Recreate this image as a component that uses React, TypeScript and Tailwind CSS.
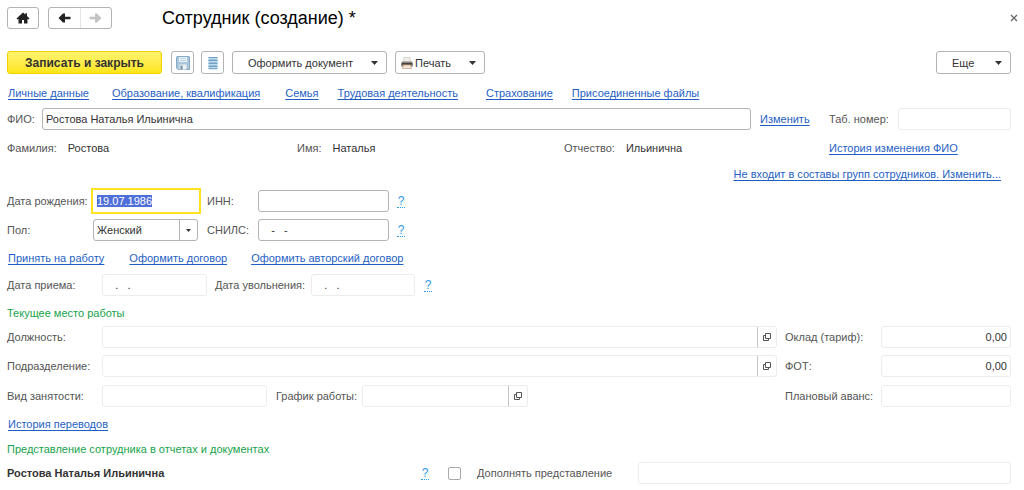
import type { ReactNode } from "react";
import { clsx } from "clsx";

type LinkProps = {
  children: ReactNode;
  className?: string;
};

const TextLink = ({ children, className }: LinkProps) => (
  <a href="#" className={clsx("whitespace-nowrap text-[#1f5fc4] underline underline-offset-2", className)}>
    {children}
  </a>
);

const Help = ({ className }: { className?: string }) => (
  <a
    href="#"
    aria-label="Справка"
    className={clsx("w-2 shrink-0 border-b border-dotted border-[#2f9be6] text-center text-[12px] leading-3 text-[#2f9be6]", className)}
  >
    ?
  </a>
);

type FieldProps = {
  id: string;
  label: string;
  labelClass?: string;
  className?: string;
  value?: string;
  muted?: boolean;
};

const Field = ({ id, label, labelClass, className, value = "", muted }: FieldProps) => (
  <>
    <label htmlFor={id} className={clsx("shrink-0 whitespace-nowrap", labelClass)}>
      {label}
    </label>
    <input
      id={id}
      type="text"
      defaultValue={value}
      readOnly={muted}
      className={clsx(
        "h-[22px] min-w-0 rounded-[3px] border bg-white px-[3px] whitespace-pre text-[#333] outline-none",
        muted ? "border-[#ececec]" : "border-[#b3b3b3]",
        className
      )}
    />
  </>
);

const OpenIcon = () => (
  <svg viewBox="0 0 10 10" className="size-[10px]" fill="none" stroke="#555" strokeWidth="1">
    <path d="M3.500 1.500h5v5h-5z" />
    <path d="M3.500 3.500h-2v5h5v-2" />
  </svg>
);

type PickerProps = {
  id: string;
  label: string;
  labelClass?: string;
  className?: string;
};

const Picker = ({ id, label, labelClass, className }: PickerProps) => (
  <>
    <label htmlFor={id} className={clsx("shrink-0 whitespace-nowrap", labelClass)}>
      {label}
    </label>
    <div className={clsx("flex h-[22px] min-w-0 rounded-[3px] border border-[#ececec] bg-white", className)}>
      <input id={id} type="text" readOnly className="min-w-0 flex-1 px-[3px] outline-none" />
      <button type="button" aria-label="Открыть" className="flex w-[19px] items-center justify-center border-l border-[#c4c4c4]">
        <OpenIcon />
      </button>
    </div>
  </>
);

const Caret = () => (
  <svg viewBox="0 0 7 4" className="h-1 w-[7px]" fill="#333">
    <path d="M0 0h7L3.500 4z" />
  </svg>
);

const buttonClass =
  "flex h-[23px] items-center rounded-[3px] border border-[#b3b3b3] bg-white text-[#333] whitespace-nowrap";

const HomeIcon = () => (
  <svg viewBox="0 0 14 12" className="h-3 w-[14px]" fill="#222">
    <path d="M7 0.500L0.500 6.500l1 1L2.500 6.700V11.500h3.500V8h2v3.500h3.500V6.700l1 .8 1-1L11 4V1.200H9.300v1.300z" />
  </svg>
);

const ArrowIcon = ({ forward }: { forward?: boolean }) => (
  <svg
    viewBox="0 0 13 10"
    className={clsx("h-[10px] w-[13px]", forward && "rotate-180")}
    fill={forward ? "#c4c4c4" : "#222"}
  >
    <path d="M0.500 5L5 0.500H7V3.800H12.500V6.200H7V9.500H5z" />
  </svg>
);

const SaveIcon = () => (
  <svg viewBox="0 0 14 14" className="size-[14px]">
    <path d="M1 0.500h12l.5.5v12.500H2L.5 12V1z" fill="#a9c6dc" stroke="#86a9c4" />
    <path d="M3 1h8v5H3z" fill="#eef6fb" />
    <path d="M4 2.500h6M4 4.500h6" stroke="#b4d3e8" />
    <path d="M3.500 8.500h7v5h-7z" fill="#edf2f5" />
    <path d="M4.500 9.500h2v4h-2z" fill="#6f8da3" />
  </svg>
);

const ListIcon = () => (
  <svg viewBox="0 0 10 14" className="h-[14px] w-[10px]">
    <path d="M.5 1h9v12h-9z" fill="#9cc3de" />
    <path d="M.5 1.500h9M.5 4.500h9M.5 7.500h9M.5 10.500h9M.5 12.800h9" stroke="#6796b6" strokeWidth=".8" />
    <path d="M1 2.500h8M1 5.500h8M1 8.500h8M1 11.500h8" stroke="#bcdcf0" />
  </svg>
);

const PrinterIcon = () => (
  <svg viewBox="0 0 12 12" className="size-3">
    <path d="M3 .5h6l.5 4.500h-7z" fill="#f0ede9" stroke="#c4bdb5" strokeWidth=".6" />
    <path d="M1 4.500h10l1 2v3H0v-3z" fill="#8f8782" />
    <path d="M1 6h10v1.500H1z" fill="#45403c" />
    <path d="M2.500 8h7l1 3.500h-9z" fill="#f5e6d8" stroke="#b98d6c" strokeWidth=".6" />
  </svg>
);

const Header = () => (
  <header className="flex h-[22px] items-center">
    <button type="button" aria-label="Главная" className="flex h-[22px] w-8 items-center justify-center rounded-[3px] border border-[#b3b3b3]">
      <HomeIcon />
    </button>
    <div className="ml-[9px] flex h-[22px] w-16 rounded-[3px] border border-[#b3b3b3]">
      <button type="button" aria-label="Назад" className="flex flex-1 items-center justify-center border-r border-[#e4e4e4]">
        <ArrowIcon />
      </button>
      <button type="button" aria-label="Вперед" className="flex flex-1 items-center justify-center">
        <ArrowIcon forward />
      </button>
    </div>
    <h1 className="ml-[50px] flex-1 text-[18px] leading-[22px] text-black">Сотрудник (создание) *</h1>
    <button type="button" aria-label="Закрыть" className="-mr-2 p-px">
      <svg viewBox="0 0 8 8" className="size-2" stroke="#666" strokeWidth="1.300">
        <path d="M1 1l6 6M7 1L1 7" />
      </svg>
    </button>
  </header>
);

const Toolbar = () => (
  <div className="mt-[22px] flex">
    <button
      type="button"
      className="h-[23px] w-[155px] rounded-[3px] border border-[#f0d000] bg-linear-to-b from-[#fff36b] to-[#ffe60f] text-[12px] font-bold text-[#333]"
    >
      Записать и закрыть
    </button>
    <button type="button" aria-label="Записать" className={clsx(buttonClass, "ml-[9px] w-[23px] justify-center")}>
      <SaveIcon />
    </button>
    <button type="button" aria-label="Список" className={clsx(buttonClass, "ml-[7px] w-[23px] justify-center")}>
      <ListIcon />
    </button>
    <button type="button" className={clsx(buttonClass, "ml-2 w-[155px] justify-between pr-2 pl-[15px]")}>
      Оформить документ
      <Caret />
    </button>
    <button type="button" className={clsx(buttonClass, "ml-2 w-[90px] pr-2 pl-[5px]")}>
      <PrinterIcon />
      <span className="ml-[2px] flex-1 text-left">Печать</span>
      <Caret />
    </button>
    <button type="button" className={clsx(buttonClass, "ml-auto w-[75px] justify-between pr-2 pl-[15px]")}>
      Еще
      <Caret />
    </button>
  </div>
);

const NameItem = ({ label, value }: { label: string; value: string }) => (
  <div className="flex gap-[11px]">
    <span>{label}</span>
    <span className="text-[#333]">{value}</span>
  </div>
);

const App = () => {
  return (
    <main className="min-h-screen bg-white pt-[7px] pr-[13px] pb-[6px] pl-[7px] font-['Liberation_Sans',Arial,sans-serif] text-[11px] leading-[22px] text-[#555]">
      <Header />
      <Toolbar />

      <nav className="mt-2 flex">
        <TextLink className="ml-px">Личные данные</TextLink>
        <TextLink className="ml-[23px]">Образование, квалификация</TextLink>
        <TextLink className="ml-[25px]">Семья</TextLink>
        <TextLink className="ml-[19px]">Трудовая деятельность</TextLink>
        <TextLink className="ml-7">Страхование</TextLink>
        <TextLink className="ml-[19px]">Присоединенные файлы</TextLink>
      </nav>

      <form>
        <div className="mt-1 flex items-center">
          <Field id="fio" label="ФИО:" labelClass="w-[35px]" className="flex-1" value="Ростова Наталья Ильинична" />
          <TextLink className="ml-[9px] w-[69px]">Изменить</TextLink>
          <Field id="number" label="Таб. номер:" labelClass="w-[69px]" className="w-[113px]" muted />
        </div>

        <div className="mt-[7px] grid grid-cols-[290fr_267fr_265fr_182px]">
          <NameItem label="Фамилия:" value="Ростова" />
          <NameItem label="Имя:" value="Наталья" />
          <NameItem label="Отчество:" value="Ильинична" />
          <TextLink>История изменения ФИО</TextLink>
        </div>

        <div className="mt-1 flex justify-end pr-[10px]">
          <TextLink>Не входит в составы групп сотрудников. Изменить...</TextLink>
        </div>

        <div className="mt-[3px] flex items-center">
          <label htmlFor="birth" className="w-[84px] whitespace-nowrap">
            Дата рождения:
          </label>
          <input
            id="birth"
            type="text"
            defaultValue="19.07.1986"
            autoFocus
            onFocus={(e) => e.target.select()}
            className="h-[26px] w-[110px] border-2 border-[#ffe11f] px-1 text-[#333] outline-none selection:bg-[#4f6fd9] selection:text-white"
          />
          <Field id="inn" label="ИНН:" labelClass="ml-[6px] w-[51px]" className="w-[131px]" />
          <Help className="ml-2" />
        </div>

        <div className="mt-[5px] flex items-center">
          <label htmlFor="sex" className="w-[86px]">
            Пол:
          </label>
          <div className="relative w-[105px]">
            <select
              id="sex"
              className="block h-[22px] w-full appearance-none rounded-[3px] border border-[#b3b3b3] bg-white px-[3px] leading-5 text-[#333] outline-none"
            >
              <option>Женский</option>
              <option>Мужской</option>
            </select>
            <span className="pointer-events-none absolute inset-y-px right-px flex w-[18px] items-center justify-center border-l border-[#b3b3b3]">
              <svg viewBox="0 0 5 3" className="h-[3px] w-[5px]" fill="#333">
                <path d="M0 0h5L2.500 3z" />
              </svg>
            </span>
          </div>
          <Field id="snils" label="СНИЛС:" labelClass="ml-[9px] w-[51px]" className="w-[131px]" value="   -   -" />
          <Help className="ml-2" />
        </div>

        <div className="mt-[6px] flex">
          <TextLink className="ml-px">Принять на работу</TextLink>
          <TextLink className="ml-[25px]">Оформить договор</TextLink>
          <TextLink className="ml-6">Оформить авторский договор</TextLink>
        </div>

        <div className="mt-[5px] flex items-center">
          <Field id="hired" label="Дата приема:" labelClass="w-[95px]" className="w-[105px]" value="   .   ." muted />
          <Field id="fired" label="Дата увольнения:" labelClass="ml-2 w-24" className="w-[104px]" value="   .   ." muted />
          <Help className="ml-[9px]" />
        </div>

        <h2 className="mt-[6px] text-[#16a34a]">Текущее место работы</h2>

        <div className="mt-[2px] flex items-center">
          <Picker id="position" label="Должность:" labelClass="w-[95px]" className="flex-1" />
          <Field id="salary" label="Оклад (тариф):" labelClass="ml-2 w-24" className="w-[130px] text-right" value="0,00" muted />
        </div>

        <div className="mt-[7px] flex items-center">
          <Picker id="department" label="Подразделение:" labelClass="w-[95px]" className="flex-1" />
          <Field id="fund" label="ФОТ:" labelClass="ml-2 w-24" className="w-[130px] text-right" value="0,00" muted />
        </div>

        <div className="mt-2 flex items-center">
          <Field id="employment" label="Вид занятости:" labelClass="w-[95px]" className="w-[165px]" muted />
          <Picker id="schedule" label="График работы:" labelClass="ml-[9px] w-[86px]" className="w-[166px]" />
          <Field id="advance" label="Плановый аванс:" labelClass="ml-auto w-24" className="w-[130px]" muted />
        </div>

        <div className="mt-[6px] flex">
          <TextLink className="ml-px">История переводов</TextLink>
        </div>

        <h2 className="mt-[3px] text-[#16a34a]">Представление сотрудника в отчетах и документах</h2>

        <div className="mt-[2px] flex items-center">
          <strong className="w-[414px] text-[#333]">Ростова Наталья Ильинична</strong>
          <Help />
          <input
            id="extend"
            type="checkbox"
            className="ml-[19px] size-[13px] shrink-0 appearance-none rounded-[2px] border border-[#aaa] bg-white"
          />
          <label htmlFor="extend" className="ml-4 w-[161px]">
            Дополнять представление
          </label>
          <input
            type="text"
            aria-label="Представление"
            readOnly
            className="h-[22px] min-w-0 flex-1 rounded-[3px] border border-[#ececec] px-[3px] outline-none"
          />
        </div>
      </form>
    </main>
  );
};

export default App;
